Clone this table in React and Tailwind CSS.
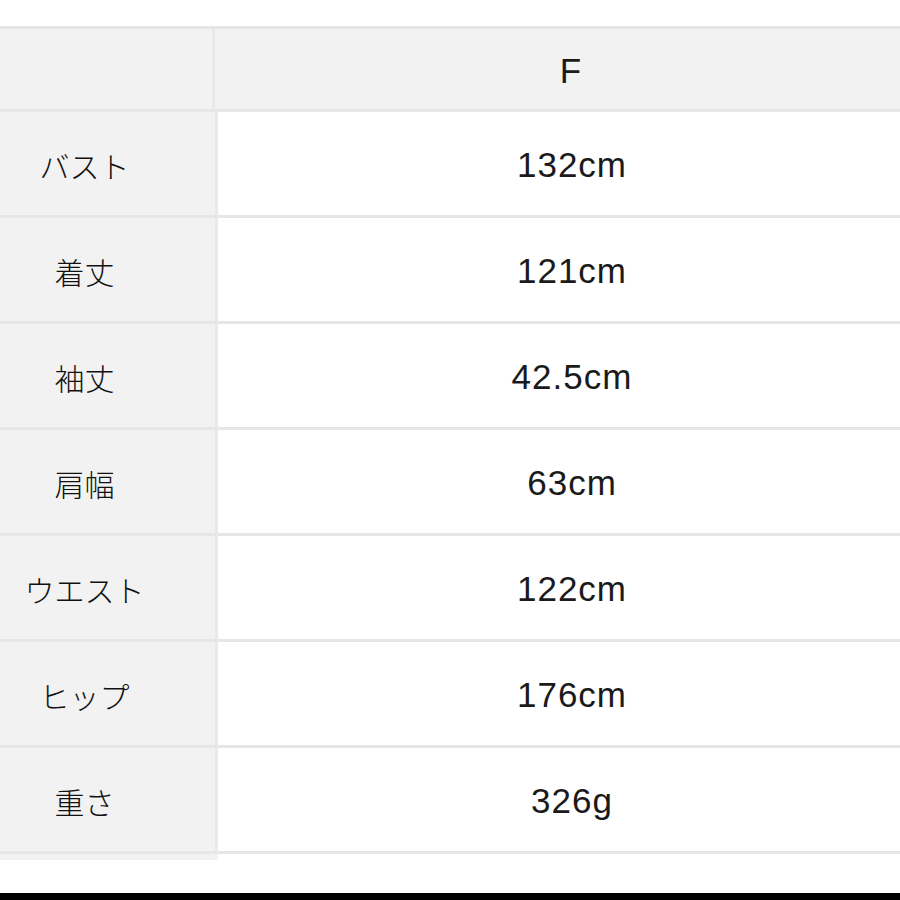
import React from "react";

const rows = [
  ["バスト", "132cm"],
  ["着丈", "121cm"],
  ["袖丈", "42.5cm"],
  ["肩幅", "63cm"],
  ["ウエスト", "122cm"],
  ["ヒップ", "176cm"],
  ["重さ", "326g"],
];

const jp = { fontFamily: '"Noto Sans CJK JP", "Noto Sans", sans-serif' };
const latin = { fontFamily: '"Liberation Sans", "Noto Sans CJK JP", sans-serif' };

export default function App() {
  return (
    <div className="w-[900px] h-[900px] bg-white flex flex-col overflow-hidden text-[#1a1a1a]">
      <div className="h-[26px] shrink-0" />

      {/* header */}
      <div className="flex h-[86px] shrink-0 border-y-[3px] border-[#e6e6e6] bg-[#f2f2f2]">
        <div className="w-[215px] shrink-0 border-r-[3px] border-[#e9e9e9]" />
        <div className="flex-1 flex items-center justify-center pl-[26px] pt-[4px] text-[35px]" style={latin}>
          F
        </div>
      </div>

      {/* body */}
      {rows.map(([label, value]) => (
        <div key={label} className="flex h-[106px] shrink-0">
          <div
            className="w-[218px] shrink-0 bg-[#f2f2f2] border-r-[3px] border-[#e9e9e9] border-b-[3px] border-b-[#e6e6e6] flex items-center justify-center pr-[46px] pt-[4px] text-[30px] font-light text-[#111]"
            style={jp}
          >
            {label}
          </div>
          <div
            className="flex-1 flex items-center justify-center pl-[26px] pt-[4px] border-b-[3px] border-[#e6e6e6] text-[35px] tracking-[1px]"
            style={latin}
          >
            {value}
          </div>
        </div>
      ))}

      <div className="flex h-[6px] shrink-0">
        <div className="w-[218px] bg-[#f2f2f2]" />
      </div>

      <div className="flex-1" />
      <div className="h-[7px] bg-black shrink-0" />
    </div>
  );
}
